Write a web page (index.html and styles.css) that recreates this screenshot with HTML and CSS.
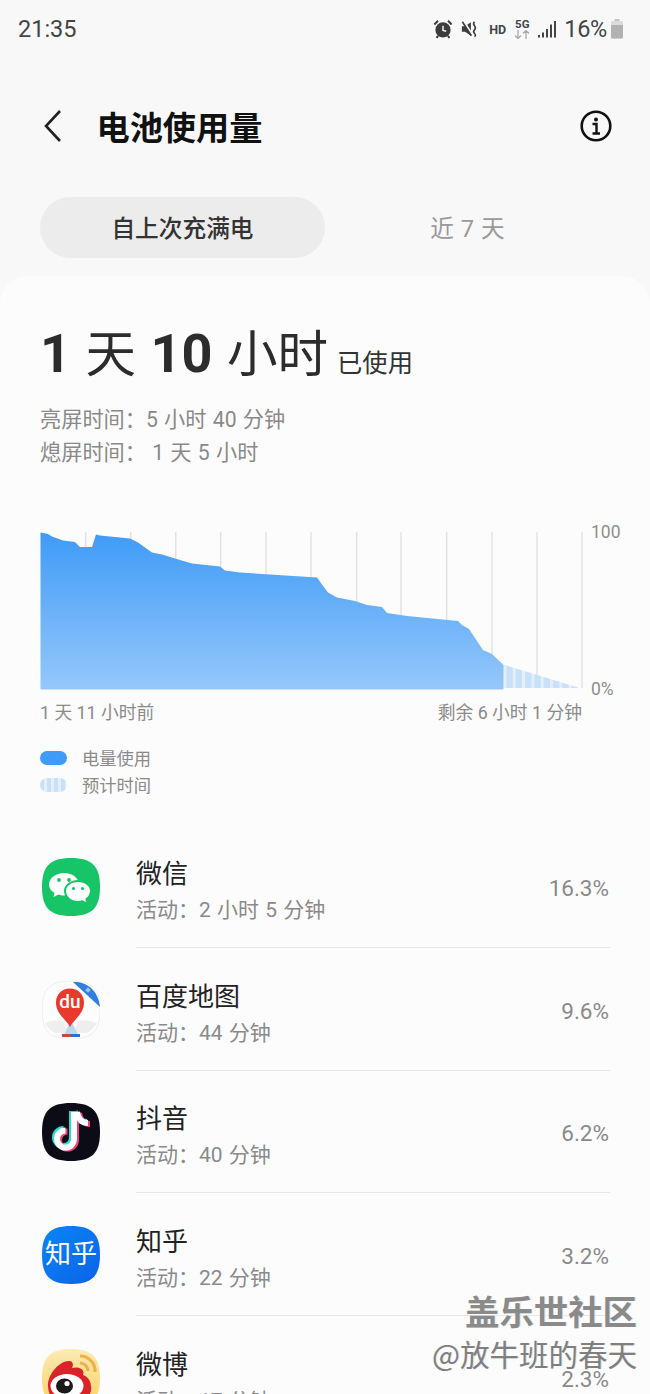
FILE: index.html
```html
<!DOCTYPE html>
<html lang="zh">
<head>
<meta charset="utf-8">
<title>电池使用量</title>
<link rel="stylesheet" href="styles.css">
</head>
<body>
<div class="screen">
  <div class="status">
    <span class="clock">21:35</span>
    <div class="status-icons">
      <svg class="si-alarm" viewBox="0 0 22 22" width="20" height="20"><circle cx="11" cy="12" r="8.4" fill="#3c3c3c"/><path d="M11 7.5V12.5L14.5 13.5" fill="none" stroke="#f8f8f8" stroke-width="1.6"/><path d="M1.5 6 5.5 2M20.5 6 16.5 2M5.5 18.5 4 21M16.5 18.5 18 21" fill="none" stroke="#3c3c3c" stroke-width="2.2"/></svg>
      <svg class="si-mute" viewBox="0 0 20 20" width="18" height="20"><path d="M1 7H4.500L11 2.500V17.500L4.500 13H1Z" fill="#3c3c3c"/><path d="M2.500 1 12.500 17" stroke="#f8f8f8" stroke-width="3"/><path d="M1.500 2 11.500 17.500" stroke="#3c3c3c" stroke-width="1.800"/><path d="M15 2Q13 4 15 6.500T15 11 15 15 15 18.500" fill="none" stroke="#3c3c3c" stroke-width="1.800"/></svg>
      <span class="si-hd">HD</span>
      <span class="si-5g"><span>5G</span><svg viewBox="0 0 16 9" width="16" height="9"><path d="M4 0V8M1 5.500 4 8.500 7 5.500M12 9V1M9 3.500 12 .5 15 3.500" fill="none" stroke="#a8a8a8" stroke-width="1.300"/></svg></span>
      <svg class="si-signal" viewBox="0 0 18 18" width="18" height="18"><rect x="0" y="15" width="2" height="2.500" fill="#444"/><rect x="4" y="12.500" width="2" height="5" fill="#444"/><rect x="8" y="9" width="2" height="8.500" fill="#444"/><rect x="12" y="4.500" width="2" height="13" fill="#444"/><rect x="16" y="1" width="2" height="16.500" fill="#444"/></svg>
      <span class="si-pct">16%</span>
      <svg class="si-batt" viewBox="0 0 12 20" width="12" height="20"><rect x="3.500" y="0" width="5" height="2" fill="#c4c4c4"/><path d="M1 2H11Q12 2 12 3V18Q12 19.500 10.500 19.500H1.500Q0 19.500 0 18V3Q0 2 1 2Z" fill="#dcdcdc"/><path d="M0 6H12V18Q12 19.500 10.500 19.500H1.500Q0 19.500 0 18Z" fill="#b2b2b2"/></svg>
    </div>
  </div>

  <header class="appbar">
    <svg class="back" viewBox="0 0 20 34" width="20" height="34"><path d="M17 2 3 17 17 32" fill="none" stroke="#222" stroke-width="2.600"/></svg>
    <h1 class="title">电池使用量</h1>
    <svg class="info" viewBox="0 0 32 32" width="32" height="32"><circle cx="16" cy="16" r="14.300" fill="none" stroke="#111" stroke-width="2.600"/><circle cx="16" cy="9.500" r="2" fill="#111"/><path d="M12.500 14H16.500V23M12.500 23.500H20" fill="none" stroke="#111" stroke-width="2.400"/></svg>
  </header>

  <nav class="tabs">
    <span class="tab tab-on">自上次充满电</span>
    <span class="tab">近 7 天</span>
  </nav>

  <main class="card">
    <div class="summary">
      <span class="big"><b>1</b> 天 <b>10</b> 小时</span>
      <span class="used">已使用</span>
    </div>
    <p class="screen-time">亮屏时间：5 小时 40 分钟</p>
    <p class="screen-time">熄屏时间： 1 天 5 小时</p>

    <div class="chart">
      <svg class="chart-svg" viewBox="0 0 544 160" width="544" height="160">
        <defs>
          <linearGradient id="fill" x1="0" y1="0" x2="0" y2="1"><stop offset="0" stop-color="#3f9bf7"/><stop offset="1" stop-color="#96c7fb"/></linearGradient>
          <pattern id="stripes" patternUnits="userSpaceOnUse" width="9.300" height="160" x="463.500"><rect width="9.300" height="160" fill="#c9e0f9"/><rect width="3" height="160" fill="#e3effc"/></pattern>
        </defs>
        <g stroke="#e2e2e2" stroke-width="1.500">
          <path d="M45.700 2V158M90.700 2V158M135.700 2V158M180.700 2V158M226 2V158M271 2V158M316.700 2V158M361 2V158M406.700 2V158M452 2V158M497 2V158M542 2V158"/>
        </g>
        <path fill="url(#stripes)" d="M463.500 134.500 538 157.500V158H463.500Z"/>
        <path fill="url(#fill)" d="M.5 2.500 8 4 12 6.500 23 10.500 35 12 40 17 52 17 56 4.500 60 5.500 90 8.500 98 12.500 112 22.500 122 24.500 135 28.500 152 33.500 180 36.500 185 40.500 200 42.500 277 47.500 282 54.500 288 62.500 297 67.500 315 71 327 75 342 77 347 83 367 86 418 91 422 95 429 99 443 120 452 124 463.500 135V159.500H.5Z"/>
      </svg>
      <span class="axis axis-top">100</span>
      <span class="axis axis-bottom">0%</span>
    </div>
    <div class="chart-labels">
      <span>1 天 11 小时前</span>
      <span>剩余 6 小时 1 分钟</span>
    </div>
    <ul class="legend">
      <li><i class="swatch swatch-solid"></i>电量使用</li>
      <li><i class="swatch swatch-striped"></i>预计时间</li>
    </ul>

    <ul class="apps">
      <li class="app">
        <svg class="app-icon" viewBox="0 0 58 58"><path d="M29 0C50 0 58 8 58 29S50 58 29 58 0 50 0 29 8 0 29 0Z" fill="#17c568"/><path d="M22 15C14 15 7 20 7 26.500 7 30 9 33 12.500 35L11.500 39 16.500 36.500C18 37 20 37.500 22 37.500 31 37.500 37 32.500 37 26.500S31 15 22 15Z" fill="#fff"/><path d="M36 22C28 22 22 27 22 33S28 45 36 45C37.500 45 39 44.800 40 44.300L45 47 44 42.500C47.500 40.500 50 37 50 33 50 27 44 22 36 22Z" fill="#17c568"/><path d="M36 24C29 24 24 28 24 33S29 43 36 43C37.500 43 39 42.800 40.200 42.300L44 44 43.300 40.800C46 39 48 36.200 48 33 48 28 43 24 36 24Z" fill="#fff"/><circle cx="17" cy="22" r="1.900" fill="#17c568"/><circle cx="27" cy="22" r="1.900" fill="#17c568"/><circle cx="31.500" cy="30.500" r="1.600" fill="#17c568"/><circle cx="40.500" cy="30.500" r="1.600" fill="#17c568"/></svg>
        <div class="app-body">
          <div class="app-text"><div class="app-name">微信</div><div class="app-sub">活动：2 小时 5 分钟</div></div>
          <span class="app-pct">16.3%</span>
        </div>
      </li>
      <li class="app">
        <svg class="app-icon" viewBox="0 0 58 58"><path d="M29 0C50 0 58 8 58 29S50 58 29 58 0 50 0 29 8 0 29 0Z" fill="#fdfdfd" stroke="#eee" stroke-width="1"/><path d="M3 42Q14 38 22 40L26 52H13Q7 49 3 42ZM55 42Q44 38 36 40L32 52H45Q51 49 55 42Z" fill="#eeeeee"/><path d="M21 56 27 43H31L37 56Z" fill="#bcd8f0"/><rect x="20" y="53" width="9" height="3" fill="#d8403a"/><rect x="29" y="53" width="9" height="3" fill="#2c6fd0"/><path d="M28 46C24 38 14 33 14 21.500 14 13.500 20 7.500 28 7.500S42 13.500 42 21.500C42 33 32 38 28 46Z" fill="#e8392c"/><text x="28" y="27" class="du">du</text><path d="M31 1C42 0 56 7 58 26Z" fill="#2f7ee0"/><rect x="44" y="7" width="4" height="4" fill="#9cc4f2" transform="rotate(40 46 9)"/></svg>
        <div class="app-body">
          <div class="app-text"><div class="app-name">百度地图</div><div class="app-sub">活动：44 分钟</div></div>
          <span class="app-pct">9.6%</span>
        </div>
      </li>
      <li class="app">
        <svg class="app-icon" viewBox="0 0 58 58"><path d="M29 0C50 0 58 8 58 29S50 58 29 58 0 50 0 29 8 0 29 0Z" fill="#0c0c16"/><g fill="none" stroke-width="6"><path class="tt-cyan" d="M30 8V34.500A8.500 8.500 0 1 1 21.500 26M33 8C34 15 38 19 45 19"/><path class="tt-pink" d="M34 10V37A8.500 8.500 0 1 1 25.500 28.500M37 10C38 17 42 21 48 21"/><path class="tt-white" d="M32 9V36A8.500 8.500 0 1 1 23.500 27.500M35 9C36 16 40 20 46 20"/></g></svg>
        <div class="app-body">
          <div class="app-text"><div class="app-name">抖音</div><div class="app-sub">活动：40 分钟</div></div>
          <span class="app-pct">6.2%</span>
        </div>
      </li>
      <li class="app">
        <svg class="app-icon" viewBox="0 0 58 58"><defs><linearGradient id="zh" x1="0" y1="0" x2="1" y2="1"><stop offset="0" stop-color="#0a86f5"/><stop offset="1" stop-color="#0b62e8"/></linearGradient></defs><path d="M29 0C50 0 58 8 58 29S50 58 29 58 0 50 0 29 8 0 29 0Z" fill="url(#zh)"/><text x="29" y="37" class="zhihu">知乎</text></svg>
        <div class="app-body">
          <div class="app-text"><div class="app-name">知乎</div><div class="app-sub">活动：22 分钟</div></div>
          <span class="app-pct">3.2%</span>
        </div>
      </li>
      <li class="app">
        <svg class="app-icon" viewBox="0 0 58 58"><defs><linearGradient id="wb" x1="0" y1="0" x2="0" y2="1"><stop offset="0" stop-color="#fcebb4"/><stop offset="1" stop-color="#fdd060"/></linearGradient></defs><path d="M29 0C50 0 58 8 58 29S50 58 29 58 0 50 0 29 8 0 29 0Z" fill="url(#wb)"/><path d="M38 7A15 15 0 0 1 53 23M38 14A8 8 0 0 1 46 22" fill="none" stroke="#eeb04a" stroke-width="3.200"/><path d="M6 36C6 25 18 11 28 12 32 13 31 17 30 19 38 17 43 21 41 26 47 28 50 34 49 42 46 52 34 58 26 58 14 58 6 48 6 36Z" fill="#d9222a"/><ellipse cx="25" cy="37" rx="16.500" ry="12" fill="#fff"/><ellipse cx="22.500" cy="37" rx="8.500" ry="7.500" fill="#1a1a1a"/><circle cx="25" cy="34.500" r="2.600" fill="#fff"/></svg>
        <div class="app-body">
          <div class="app-text"><div class="app-name">微博</div><div class="app-sub">活动：17 分钟</div></div>
          <span class="app-pct">2.3%</span>
        </div>
      </li>
    </ul>
  </main>

  <div class="watermark">
    <div class="wm-a">盖乐世社区</div>
    <div class="wm-b">@放牛班的春天</div>
  </div>
</div>
</body>
</html>
```

FILE: styles.css
```css
* { box-sizing: border-box; }
html, body { margin: 0; padding: 0; }
body { font-family: Roboto, "Noto Sans CJK SC", sans-serif; background: #f8f8f8; color: #222; }
ul { list-style: none; margin: 0; padding: 0; }
p, h1 { margin: 0; }

.screen { position: relative; width: 650px; height: 1394px; overflow: hidden; background: #f8f8f8; }

.status { height: 58px; padding: 0 27px 0 18px; display: flex; align-items: center; justify-content: space-between; }
.clock { font-size: 23.5px; color: #444; }
.status-icons { display: flex; align-items: center; }
.si-alarm { margin-right: 8px; }
.si-mute { margin-right: 10px; }
.si-hd { font-size: 12.5px; font-weight: 700; color: #444; width: 20px; margin-right: 5px; }
.si-5g { display: flex; flex-direction: column; align-items: center; width: 16px; font-size: 11.5px; font-weight: 700; line-height: 11px; color: #444; margin-right: 8px; }
.si-signal { margin-right: 8px; }
.si-pct { font-size: 23.5px; letter-spacing: -0.3px; color: #444; margin-right: 4px; }

.appbar { height: 76px; margin-top: 32px; display: flex; align-items: center; padding: 0 38px 0 43px; }
.back { margin-top: -4px; }
.title { font-size: 33.2px; line-height: 72px; height: 72px; margin-top: 2px; font-weight: 700; color: #111; margin-left: 33.500px; flex: 1; }
.info { margin-top: -4px; }

.tabs { display: flex; margin: 31px 0 0 40px; }
.tab { width: 285px; height: 61px; padding-bottom: 1px; display: flex; align-items: center; justify-content: center; font-size: 23.7px; word-spacing: 1px; color: #9a9a9a; border-radius: 31px; }
.tab-on { background: #ececec; color: #333; font-weight: 500; }

.card { margin-top: 18px; height: 1200px; background: #fcfcfc; border-radius: 28px 28px 0 0; padding: 43px 0 0 40px; }

.summary { display: flex; align-items: baseline; height: 70px; }
.big { font-size: 50.5px; line-height: 70px; word-spacing: 2px; color: #2c2c2c; }
.big b { font-size: 54px; font-weight: 700; }
.used { font-size: 25.3px; color: #333; margin-left: 9px; }
.screen-time { font-size: 21.2px; word-spacing: 1px; line-height: 33px; color: #8a8a8a; }
.summary + .screen-time { margin-top: 14px; }

.chart { position: relative; margin-top: 61px; height: 160px; }
.chart-svg { display: block; }
.axis { position: absolute; left: 551px; font-size: 17.5px; color: #8e8e8e; line-height: 20px; }
.axis-top { top: -8px; }
.axis-bottom { top: 149px; }

.chart-labels { display: flex; justify-content: space-between; width: 542px; margin-top: 10px; font-size: 17.8px; line-height: 26px; color: #8a8a8a; }

.legend { margin-top: 18px; font-size: 17.3px; color: #8a8a8a; }
.legend li { display: flex; align-items: center; height: 27px; }
.swatch { display: block; width: 27px; height: 14px; border-radius: 7px; margin-right: 15px; }
.swatch-solid { background: #3f9bf7; }
.swatch-striped { background: repeating-linear-gradient(90deg, #c9e0f9 0 4px, #e3effc 4px 7px); }

.apps { margin-top: 52px; }
.app { display: flex; height: 122.7px; align-items: flex-start; }
.app-icon { width: 58px; height: 58px; margin: 8px 36px 0 2px; flex: none; }
.app-body { flex: 1; height: 98px; margin-right: 40px; border-bottom: 1.5px solid #e6e6e6; display: flex; justify-content: space-between; }
.app:last-child .app-body { border-bottom: 0; }
.app-name { font-size: 26px; line-height: 36px; color: #222; margin-top: 6px; }
.app-sub { font-size: 21px; word-spacing: 1px; line-height: 36px; color: #8a8a8a; white-space: nowrap; }
.app-pct { font-size: 22.5px; color: #8a8a8a; line-height: 30px; margin-top: 23px; margin-right: 1px; }

.du { font-family: Roboto, sans-serif; font-size: 19px; font-weight: 500; fill: #fff; text-anchor: middle; }
.zhihu { font-family: "Noto Sans CJK SC", sans-serif; font-size: 26px; font-weight: 400; fill: #fff; text-anchor: middle; }
.tt-cyan { stroke: #2cd8d4; }
.tt-pink { stroke: #f0417a; }
.tt-white { stroke: #fff; }

.watermark { position: absolute; right: 13px; top: 1286px; text-align: right; font-family: "Noto Sans CJK SC", sans-serif; color: #7f7f7f; line-height: 1; text-shadow: 1px 0 0 #e4e4e4; }
.wm-a { font-size: 34.4px; font-weight: 700; color: #8a8a8a; height: 46px; line-height: 48px; }
.wm-b { font-size: 29.5px; line-height: 42px; }
```
